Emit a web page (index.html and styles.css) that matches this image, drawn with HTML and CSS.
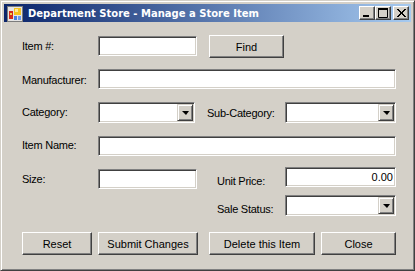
FILE: index.html
```html
<!doctype html>
<html lang="en">
<head>
  <meta charset="utf-8">
  <title>Department Store - Manage a Store Item</title>
  <link rel="stylesheet" href="styles.css">
</head>
<body>
  <div class="window">
    <div class="titlebar">
      <svg class="app-icon" width="16" height="16" viewBox="0 0 16 16">
        <rect x="0.5" y="0.5" width="15" height="15" fill="#e4e4e4" stroke="#7c7c7c"/>
        <rect x="2" y="5" width="4" height="8" fill="#d42a1c"/>
        <rect x="3" y="7" width="2" height="2" fill="#f4d04a"/>
        <rect x="7" y="2" width="7" height="7" fill="#f6c21e"/>
        <rect x="8" y="3" width="3" height="3" fill="#fbe79a"/>
        <rect x="7" y="10" width="3" height="4" fill="#4a7fe0"/>
        <rect x="11" y="10" width="3" height="4" fill="#6a9bf0"/>
      </svg>
      <span class="title">Department Store - Manage a Store Item</span>
      <div class="caption-buttons">
        <span class="cap-btn">
          <svg width="14" height="12" viewBox="0 0 14 12"><rect x="3" y="8" width="6" height="2" fill="#000"/></svg>
        </span>
        <span class="cap-btn">
          <svg width="14" height="12" viewBox="0 0 14 12"><path d="M2.5 2.5h9v8h-9z" fill="none" stroke="#000"/><rect x="2" y="1" width="10" height="2" fill="#000"/></svg>
        </span>
        <span class="cap-btn cap-btn--close">
          <svg width="14" height="12" viewBox="0 0 14 12"><path d="M3 2l8 8M4 2l8 8M11 2l-8 8M12 2l-8 8" stroke="#000" stroke-width="1" fill="none"/></svg>
        </span>
      </div>
    </div>

    <form class="client">
      <label class="lbl lbl--r1">Item #:</label>
      <input class="field field--short field--r1" type="text">
      <button class="btn btn--find" type="button">Find</button>

      <label class="lbl lbl--r2">Manufacturer:</label>
      <input class="field field--wide" type="text">

      <label class="lbl lbl--r3">Category:</label>
      <div class="combo combo--short"><span class="combo__value"></span><span class="combo__drop"><i class="arrow"></i></span></div>
      <label class="lbl lbl--sub">Sub-Category:</label>
      <div class="combo"><span class="combo__value"></span><span class="combo__drop"><i class="arrow"></i></span></div>

      <label class="lbl lbl--r4">Item Name:</label>
      <input class="field field--wide" type="text">

      <label class="lbl lbl--r5">Size:</label>
      <input class="field field--short field--size" type="text">
      <label class="lbl lbl--right lbl--price">Unit Price:</label>
      <input class="field field--price" type="text" value="0.00">

      <label class="lbl lbl--right lbl--status">Sale Status:</label>
      <div class="combo combo--status"><span class="combo__value"></span><span class="combo__drop"><i class="arrow"></i></span></div>

      <button class="btn btn--reset" type="button">Reset</button>
      <button class="btn btn--submit" type="button">Submit Changes</button>
      <button class="btn btn--delete" type="button">Delete this Item</button>
      <button class="btn btn--close" type="button">Close</button>
    </form>
  </div>
</body>
</html>
```

FILE: styles.css
```css
html, body {
  margin: 0;
  background-color: #d4d0c8;
}

.window {
  box-sizing: border-box;
  width: 415px;
  height: 271px;
  background-color: #d4d0c8;
  border: 1px solid;
  border-color: #d4d0c8 #404040 #404040 #d4d0c8;
  box-shadow: inset 1px 1px #fff, inset -1px -1px #808080;
  padding: 3px;
  font-family: "Liberation Sans", Arial, sans-serif;
  font-size: 11px;
  letter-spacing: -0.25px;
  color: #000;
}

/* title bar */
.titlebar {
  display: flex;
  align-items: center;
  height: 18px;
  padding-left: 3px;
  padding-right: 2px;
  background: linear-gradient(to right, #0a246a, #a6caf0);
}

.app-icon {
  flex: none;
  margin-top: 1px;
}

.title {
  margin-left: 5px;
  font-family: "DejaVu Sans", sans-serif;
  font-weight: bold;
  font-size: 10px;
  letter-spacing: 0;
  color: #fff;
  white-space: nowrap;
}

.caption-buttons {
  display: flex;
  margin-left: auto;
}

.cap-btn {
  box-sizing: border-box;
  display: flex;
  width: 16px;
  height: 14px;
  background-color: #d4d0c8;
  border: 1px solid;
  border-color: #fff #404040 #404040 #fff;
  box-shadow: inset -1px -1px #808080;
}

.cap-btn--close {
  margin-left: 2px;
}

/* client area */
.client {
  display: grid;
  grid-template-columns: 76px 111px 76px 111px;
  grid-template-rows: 34px 33px 34px 31px 28px 37px 23px;
  align-items: start;
  padding: 13px 0 0 18px;
  margin: 0;
}

.lbl {
  grid-column: 1;
  line-height: 13px;
  white-space: nowrap;
}

.lbl--r1 { margin-top: 5px; }
.lbl--r2 { margin-top: 5px; }
.lbl--r3 { margin-top: 4px; }
.lbl--r4 { margin-top: 3px; }
.lbl--r5 { margin-top: 6px; }

.lbl--sub {
  grid-column: 3;
  margin-left: -2px;
  margin-top: 5px;
}

.lbl--right {
  grid-column: 3;
  margin-left: 8px;
}

.lbl--price { margin-top: 8px; }
.lbl--status { grid-row: 6; margin-top: 8px; }

.field {
  box-sizing: border-box;
  grid-column: 2;
  height: 20px;
  margin: 0;
  padding: 0 3px;
  background-color: #fff;
  border: 1px solid;
  border-color: #808080 #fff #fff #808080;
  box-shadow: inset 1px 1px #404040, inset -1px -1px #d4d0c8;
  font: inherit;
  outline: none;
}

.field--short { width: 99px; }
.field--r1 { margin-top: 1px; }
.field--size { margin-top: 2px; }

.field--wide {
  grid-column: 2 / 5;
  width: 298px;
}

.field--price {
  grid-column: 4;
  width: 111px;
  text-align: right;
  padding-right: 2px;
}

.combo {
  box-sizing: border-box;
  grid-column: 4;
  display: flex;
  width: 111px;
  height: 21px;
  padding: 1px;
  background-color: #fff;
  border: 1px solid;
  border-color: #808080 #fff #fff #808080;
  box-shadow: inset 1px 1px #404040, inset -1px -1px #d4d0c8;
}

.combo--short {
  grid-column: 2;
  width: 97px;
}

.combo--status { grid-row: 6; }

.combo__value { flex: 1; }

.combo__drop {
  box-sizing: border-box;
  display: flex;
  align-items: center;
  justify-content: center;
  width: 16px;
  height: 17px;
  background-color: #d4d0c8;
  border: 1px solid;
  border-color: #d4d0c8 #404040 #404040 #d4d0c8;
  box-shadow: inset 1px 1px #fff, inset -1px -1px #808080;
}

.arrow {
  width: 0;
  height: 0;
  border-left: 4px solid transparent;
  border-right: 3px solid transparent;
  border-top: 4px solid #000;
  margin-top: 1px;
}

.btn {
  box-sizing: border-box;
  height: 23px;
  margin: 0;
  padding: 0;
  background-color: #d4d0c8;
  border: 1px solid;
  border-color: #fff #404040 #404040 #fff;
  box-shadow: inset -1px -1px #808080;
  font: inherit;
  color: #000;
}

.btn--find {
  grid-column: 3;
  width: 75px;
}

.btn--reset {
  grid-row: 7;
  grid-column: 1;
  width: 70px;
}

.btn--submit {
  grid-row: 7;
  grid-column: 2;
  width: 100px;
}

.btn--delete {
  grid-row: 7;
  grid-column: 3 / 5;
  justify-self: start;
  width: 106px;
}

.btn--close {
  grid-row: 7;
  grid-column: 4;
  justify-self: end;
  width: 75px;
}
```
